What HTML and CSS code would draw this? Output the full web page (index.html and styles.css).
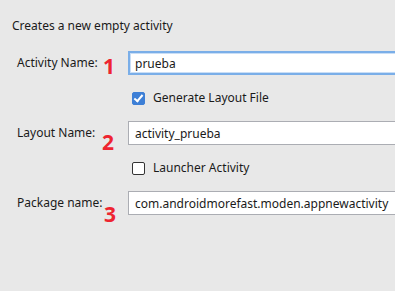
FILE: index.html
```html
<!DOCTYPE html>
<html lang="en">
<head>
    <meta charset="UTF-8">
    <meta name="viewport" content="width=device-width, initial-scale=1.0">
    <title>New Activity</title>
    <link rel="stylesheet" href="styles.css">
</head>
<body>
    <p class="intro">Creates a new empty activity</p>

    <div class="form">
        <div class="label">Activity Name:<span class="mark mark-1">1</span></div>
        <input class="field focused" type="text" value="prueba">

        <div></div>
        <label class="check"><span class="box checked"></span>Generate Layout File</label>

        <div class="label">Layout Name:<span class="mark mark-2">2</span></div>
        <input class="field" type="text" value="activity_prueba">

        <div></div>
        <label class="check"><span class="box"></span>Launcher Activity</label>

        <div class="label">Package name:<span class="mark mark-3">3</span></div>
        <input class="field" type="text" value="com.androidmorefast.moden.appnewactivity">
    </div>
</body>
</html>
```

FILE: styles.css
```css
body {
    margin: 0;
    width: 395px;
    height: 291px;
    overflow: hidden;
    background-color: #e8e8e8;
    font-family: "Noto Sans", "Open Sans", sans-serif;
    font-size: 12px;
    color: #1a1a1a;
}
.intro {
    margin: 0;
    padding: 18px 0 0 12px;
    line-height: 16px;
}
.form {
    display: grid;
    grid-template-columns: 111px 267px;
    grid-template-rows: 24px 46px 24px 46px 24px;
    padding: 17px 0 0 17px;
    align-items: center;
}
.label {
    position: relative;
    line-height: 16px;
}
.mark {
    position: absolute;
    font-family: "Open Sans", sans-serif;
    font-weight: bold;
    font-size: 21px;
    color: #ee2430;
    line-height: 20px;
}
.mark-1 { left: 86px; top: 1px; }
.mark-2 { left: 85px; top: 7px; }
.mark-3 { left: 87px; top: 9px; }
.field {
    box-sizing: border-box;
    width: 290px;
    height: 24px;
    margin: 0;
    padding: 0 6px;
    border: 1px solid #abadb3;
    background: white;
    font-family: inherit;
    font-size: 12px;
    color: #1a1a1a;
    outline: none;
}
.field.focused {
    border: 2px solid #7aaee8;
    box-shadow: inset 0 0 0 1px #c9def6;
    padding: 0 5px;
}
.check {
    display: flex;
    align-items: center;
    gap: 8px;
    padding-left: 4px;
    line-height: 16px;
}
.box {
    box-sizing: border-box;
    width: 13px;
    height: 13px;
    border: 1px solid #333;
    border-radius: 2px;
    background: white;
    position: relative;
}
.box.checked {
    border-color: #3d7fd6;
    background: #3d7fd6;
}
.box.checked::after {
    content: "";
    position: absolute;
    left: 3px;
    top: 0px;
    width: 3px;
    height: 7px;
    border: solid white;
    border-width: 0 2px 2px 0;
    transform: rotate(40deg);
}
```
